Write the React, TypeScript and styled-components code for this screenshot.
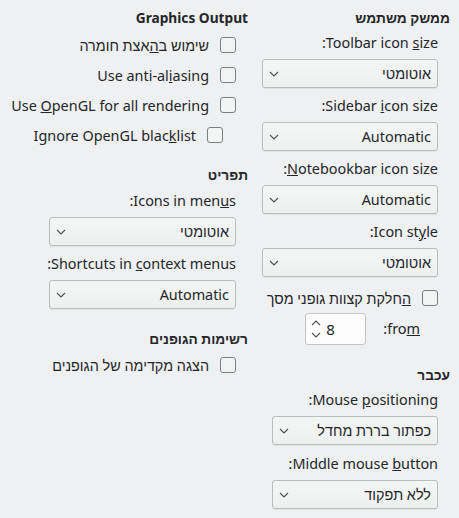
import React from 'react';
import styled, { createGlobalStyle } from 'styled-components';

const GlobalStyle = createGlobalStyle`
  html, body {
    margin: 0;
    padding: 0;
    background: #eff0f1;
  }
  body {
    font-family: "Noto Sans", "Liberation Sans", "DejaVu Sans", sans-serif;
    font-size: 14.4px;
    color: #232629;
    -webkit-font-smoothing: antialiased;
  }
`;

const Page = styled.div`
  direction: rtl;
  display: grid;
  grid-template-columns: 188px 238px;
  column-gap: 14px;
  padding: 9px 9px 0 10px;
  width: 459px;
  height: 518px;
  box-sizing: border-box;
`;

const Column = styled.div`
  display: flex;
  flex-direction: column;
`;

const Header = styled.div<{ $top?: number }>`
  font-weight: 700;
  font-size: 13.7px;
  line-height: 18px;
  height: 18px;
  white-space: nowrap;
  margin-top: ${p => p.$top ?? 0}px;
`;

const Body = styled.div<{ $top?: number; $gap?: number }>`
  display: flex;
  flex-direction: column;
  align-items: flex-start;
  padding-inline-start: 12px;
  margin-top: ${p => p.$top ?? 7}px;
  gap: ${p => p.$gap ?? 9}px;
`;

const Field = styled.div`
  display: flex;
  flex-direction: column;
  align-items: flex-start;
  gap: 7px;
`;

/* English labels are laid out left to right, with the colon moved to the
   front as the RTL dialog shows it */
const Label = styled.div`
  direction: ltr;
  line-height: 18px;
  height: 18px;
  white-space: nowrap;
`;

const Combo = styled.div<{ $width: number }>`
  width: ${p => p.$width}px;
  height: 29px;
  box-sizing: border-box;
  display: flex;
  align-items: center;
  justify-content: space-between;
  padding: 0 6px;
  background: linear-gradient(#f4f5f5, #eef0f0);
  border: 1px solid #babcbe;
  border-radius: 3px;
  box-shadow: 0 1px 1px rgba(0, 0, 0, 0.06);
  white-space: nowrap;
`;

const CheckRow = styled.div<{ $indent?: number }>`
  display: flex;
  align-items: center;
  gap: 11px;
  height: 18px;
  margin-inline-start: ${p => p.$indent ?? 0}px;
  white-space: nowrap;
`;

const CheckText = styled.span<{ $ltr?: boolean }>`
  direction: ${p => (p.$ltr ? 'ltr' : 'rtl')};
`;

const Box = styled.span`
  width: 16px;
  height: 16px;
  box-sizing: border-box;
  border: 1px solid #7b7d80;
  border-radius: 3px;
  background: #f2f3f3;
  flex: none;
`;

const SpinRow = styled.div`
  display: flex;
  align-items: center;
  gap: 17px;
  padding-inline-start: 18px;
`;

const Spin = styled.div`
  width: 61px;
  height: 32px;
  box-sizing: border-box;
  display: flex;
  direction: ltr;
  align-items: center;
  gap: 5px;
  padding-left: 5px;
  background: #fcfcfc;
  border: 1px solid #c3c5c7;
  border-radius: 3px;
  font-size: 15px;
`;

const Chevron = () => (
  <svg width="10" height="6" viewBox="0 0 10 6">
    <polyline points="1,1 5,5 9,1" fill="none" stroke="#4d4f52" strokeWidth="1.1" />
  </svg>
);

const SpinArrows = () => (
  <svg width="10" height="20" viewBox="0 0 10 20">
    <polyline points="1,6 5,2 9,6" fill="none" stroke="#4d4f52" strokeWidth="1.1" />
    <polyline points="1,14 5,18 9,14" fill="none" stroke="#4d4f52" strokeWidth="1.1" />
  </svg>
);

const Select: React.FC<{ width: number; value: string }> = ({ width, value }) => (
  <Combo $width={width}>
    <span>{value}</span>
    <Chevron />
  </Combo>
);

const Check: React.FC<{ children: React.ReactNode; indent?: number; ltr?: boolean }> = ({
  children,
  indent,
  ltr,
}) => (
  <CheckRow $indent={indent}>
    <Box />
    <CheckText $ltr={ltr}>{children}</CheckText>
  </CheckRow>
);

const App: React.FC = () => {
  return (
    <>
      <GlobalStyle />
      <Page>
        <Column>
          <Header>ממשק משתמש</Header>
          <Body>
            <Field>
              <Label>:Toolbar icon <u>s</u>ize</Label>
              <Select width={176} value="אוטומטי" />
            </Field>
            <Field>
              <Label>:Sidebar <u>i</u>con size</Label>
              <Select width={176} value="Automatic" />
            </Field>
            <Field>
              <Label>:<u>N</u>otebookbar icon size</Label>
              <Select width={176} value="Automatic" />
            </Field>
            <Field>
              <Label>:Icon st<u>y</u>le</Label>
              <Select width={176} value="אוטומטי" />
            </Field>
          </Body>
          <Body $top={12} $gap={6}>
            <Check><u>ה</u>חלקת קצוות גופני מסך</Check>
            <SpinRow>
              <Label>:fro<u>m</u></Label>
              <Spin>
                <SpinArrows />
                <span>8</span>
              </Spin>
            </SpinRow>
          </Body>
          <Header $top={21}>עכבר</Header>
          <Body $gap={10}>
            <Field>
              <Label>:Mouse <u>p</u>ositioning</Label>
              <Select width={166} value="כפתור בררת מחדל" />
            </Field>
            <Field>
              <Label>:Middle mouse <u>b</u>utton</Label>
              <Select width={166} value="ללא תפקוד" />
            </Field>
          </Body>
        </Column>

        <Column>
          <Header>Graphics Output</Header>
          <Body $top={9} $gap={12}>
            <Check>שימוש ב<u>ה</u>אצת חומרה</Check>
            <Check ltr>Use anti-al<u>i</u>asing</Check>
            <Check ltr>Use <u>O</u>penGL for all rendering</Check>
            <Check ltr indent={13}>Ignore OpenGL blac<u>k</u>list</Check>
          </Body>
          <Header $top={22}>תפריט</Header>
          <Body $top={8}>
            <Field>
              <Label>:Icons in men<u>u</u>s</Label>
              <Select width={187} value="אוטומטי" />
            </Field>
            <Field>
              <Label>:Shortcuts in <u>c</u>ontext menus</Label>
              <Select width={187} value="Automatic" />
            </Field>
          </Body>
          <Header $top={21}>רשימות הגופנים</Header>
          <Body $top={8}>
            <Check>הצגה מקדימה של הגופנים</Check>
          </Body>
        </Column>
      </Page>
    </>
  );
};

export default App;
